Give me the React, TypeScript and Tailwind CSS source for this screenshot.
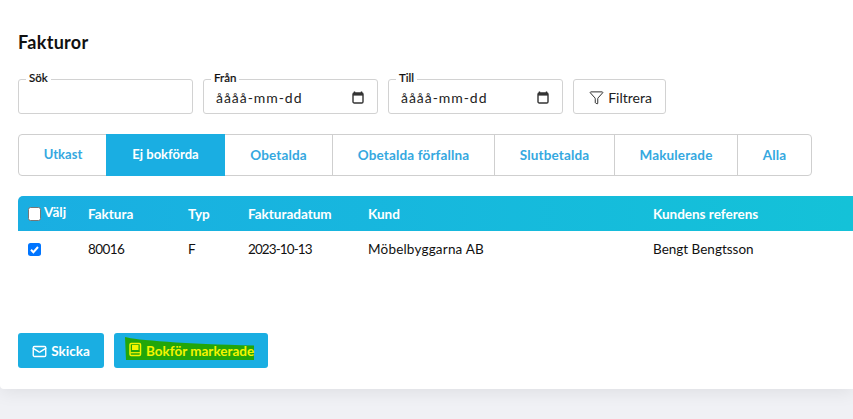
import { Filter, Mail } from "lucide-react";

function Cal() {
  return (
    <svg width="12" height="13" viewBox="0 0 12 13" className="shrink-0">
      <path d="M2.5 0.5v1.5M9.5 0.5v1.5" stroke="#222" strokeWidth="1.4" />
      <rect x="1" y="2" width="10" height="10" rx="1.3" fill="none" stroke="#333" strokeWidth="1.4" />
      <rect x="1" y="2" width="10" height="2.6" fill="#333" />
    </svg>
  );
}

function Field({ label, date }: { label: string; date?: boolean }) {
  return (
    <div className="relative w-[175px] h-[35px] border border-[#d2d2d2] rounded-[3px] flex items-center justify-between pl-[12px] pr-[13px] pt-[2px]">
      <span className="absolute left-[7px] top-[-9px] bg-white px-[3px] text-[11.5px] leading-[14px] font-medium text-[#111] [-webkit-text-stroke:0.2px_#111]">{label}</span>
      {date && <span className="text-[14px] tracking-[0.95px] text-[#222]">åååå-mm-dd</span>}
      {date && <Cal />}
    </div>
  );
}

const tabs: [string, string, string][] = [
  ["Utkast", "w-[87px]", "text-[13px] pl-[1px]"],
  ["Ej bokförda", "w-[119px]", "text-[13px]"],
  ["Obetalda", "w-[108px]", "tracking-[0.15px]"],
  ["Obetalda förfallna", "w-[162px]", "tracking-[0.15px]"],
  ["Slutbetalda", "w-[120px]", "tracking-[0.15px]"],
  ["Makulerade", "w-[123px]", "tracking-[0.15px]"],
  ["Alla", "w-[73px]", "tracking-[0.15px]"],
];

export default function App() {
  return (
    <div className="w-[853px] h-[419px] bg-[#f0f1f5] overflow-hidden font-['Lato',sans-serif]">
      <div className="h-[389px] bg-white rounded-bl-[4px] shadow-[0_3px_18px_rgba(0,0,0,0.08)] pl-[18px] pt-[31px]">
        <h1 className="text-[18px] leading-[22px] font-bold tracking-[0.3px] text-[#111]">Fakturor</h1>
        <div className="flex gap-[10px] mt-[26px] items-stretch">
          <Field label="Sök" />
          <Field label="Från" date />
          <Field label="Till" date />
          <div className="w-[93px] h-[35px] border border-[#d2d2d2] rounded-[3px] flex items-center justify-center gap-[4px] pl-[2px] pt-[1px] text-[14px] text-[#222]">
            <Filter size={15} strokeWidth={1.5} />
            <span>Filtrera</span>
          </div>
        </div>
        <div className="flex mt-[20px] w-[794px] h-[42px] border border-[#cfcfcf] rounded-[4px] text-[13.5px] font-bold text-[#35a8e0]">
          {tabs.map(([t, w, s], i) => (
            <div
              key={t}
              className={`${w} ${s} flex items-center justify-center ${i === 1 ? "bg-[#1aaee2] text-white my-[-1px]" : ""} ${i > 1 && i < 6 ? "border-r border-[#cfcfcf]" : ""}`}
            >
              {t}
            </div>
          ))}
        </div>
        <div className="mt-[20px] h-[35px] rounded-tl-[5px] bg-gradient-to-r from-[#1aaee2] to-[#14c2d8] grid grid-cols-[70px_100px_60px_120px_285px_1fr] items-center pt-[1px] text-[13.5px] font-bold text-white">
          <div className="flex items-center pl-[10px] gap-[3px]">
            <span className="w-[13px] h-[13.500px] bg-white border border-[#767676] rounded-[2.5px]" />
            <span className="mt-[-4px]">Välj</span>
          </div>
          <div>Faktura</div>
          <div>Typ</div>
          <div>Fakturadatum</div>
          <div>Kund</div>
          <div>Kundens referens</div>
        </div>
        <div className="h-[36px] grid grid-cols-[70px_100px_60px_120px_285px_1fr] items-center text-[13.5px] text-[#111]">
          <div className="pl-[10px] flex">
            <span className="w-[13px] h-[13px] bg-[#0075ff] rounded-[2.5px] flex items-center justify-center">
              <svg width="11" height="11" viewBox="0 0 11 11">
                <path d="M2 5.8 4.4 8.2 9 3" fill="none" stroke="#fff" strokeWidth="2" />
              </svg>
            </span>
          </div>
          <div className="tracking-[-0.6px]">80016</div>
          <div>F</div>
          <div className="tracking-[-0.9px]">2023-10-13</div>
          <div className="tracking-[0.2px]">Möbelbyggarna AB</div>
          <div>Bengt Bengtsson</div>
        </div>
        <div className="flex gap-[10px] mt-[66px] text-[13.5px] font-bold">
          <div className="w-[86px] h-[35px] bg-[#1aaee2] rounded-[3px] flex items-center justify-center gap-[4px] pt-[1px] text-white">
            <Mail size={15} strokeWidth={2.2} />
            <span>Skicka</span>
          </div>
          <div className="relative w-[154px] h-[35px] bg-[#1aaee2] rounded-[3px] flex items-center pl-[14px] gap-[4px] pt-[1px] text-[#f5f500]">
            <svg className="absolute left-[11px] top-[4px]" width="130" height="24" viewBox="0 0 130 24">
              <path d="M0 0C10 3 60 7 129 8.500V23H1Z" fill="#22a60a" />
            </svg>
            <svg className="relative mt-[-3px]" width="14" height="15" viewBox="0 0 14 15" fill="none">
              <rect x="2" y="1.500" width="10.500" height="12" rx="1.200" stroke="#f5f500" strokeWidth="1.500" />
              <rect x="4" y="3" width="6.500" height="5" fill="#f5f500" />
              <path d="M2.500 10.700H12" stroke="#f5f500" strokeWidth="1.200" />
            </svg>
            <span className="relative">Bokför markerade</span>
          </div>
        </div>
      </div>
    </div>
  );
}
